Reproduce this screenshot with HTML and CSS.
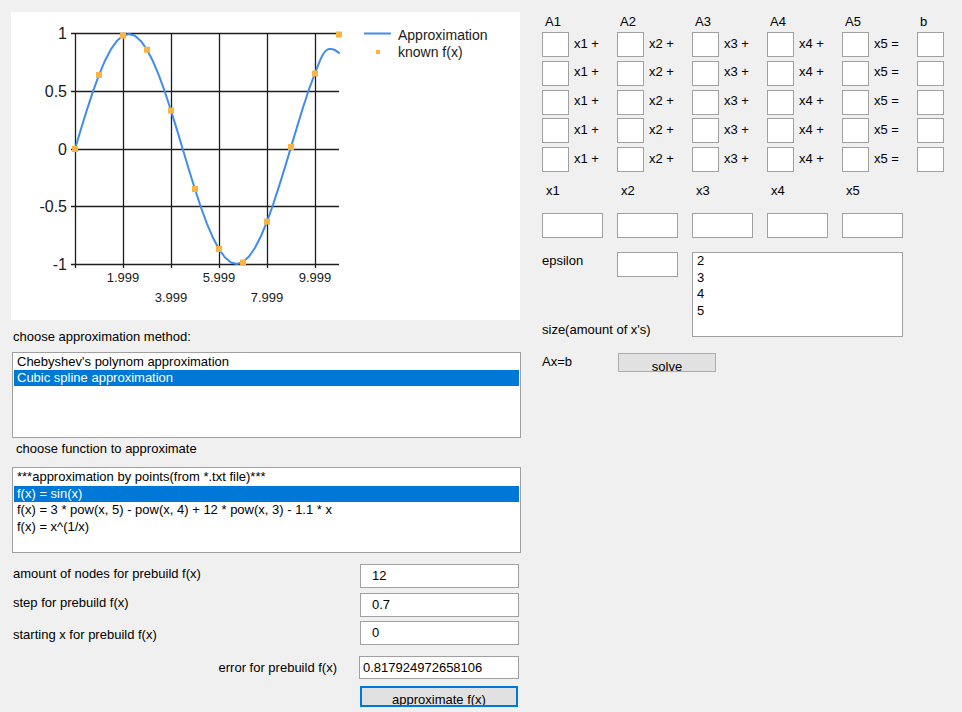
FILE: index.html
```html
<!DOCTYPE html>
<html>
<head>
<meta charset="utf-8">
<link rel="stylesheet" href="styles.css">
</head>
<body>
<div class="app">
  <div class="left">
    <div class="chart">
      <svg width="509" height="308" viewBox="11 12 509 308">
        <g class="grid">
          <path d="M71,33.5H339M71,91.5H339M71,149.5H339M71,206.5H339M71,264.5H339"/>
          <path d="M75.5,33V268M123.5,33V268M171.5,33V268M219.5,33V268M267.5,33V268M315.5,33V268"/>
        </g>
        <path class="curve" d="M75,149 L81,129 L87,109.6 L93,91.4 L99,74.9 L105,60.7 L111,49.2 L117,40.8 L123,35.7 L129,34 L135,35.8 L141,41.2 L147,49.7 L153,61.3 L159,75.7 L165,92.2 L171,110.5 L177,129.9 L183,150 L189,170 L195,189.3 L201,207.5 L207,223.8 L213,237.8 L219,249.2 L225,257.5 L231,262.5 L237,264 L243,262 L249,256.6 L255,247.8 L261,236 L267,221.6 L273,204.9 L279,186.4 L285,167.1 L291,147.1 L297,127.1 L303,107.5 L309,89.2 L315,73.4 C319,63 323,50 329,49 C333,48.5 336,50 339,53"/>
        <g class="pts">
          <rect x="72" y="146" width="6" height="6"/>
          <rect x="96" y="72" width="6" height="6"/>
          <rect x="120" y="32.7" width="6" height="6"/>
          <rect x="144" y="46.7" width="6" height="6"/>
          <rect x="168" y="107.5" width="6" height="6"/>
          <rect x="192" y="186" width="6" height="6"/>
          <rect x="216" y="246" width="6" height="6"/>
          <rect x="240" y="259.5" width="6" height="6"/>
          <rect x="264" y="218.6" width="6" height="6"/>
          <rect x="288" y="144" width="6" height="6"/>
          <rect x="312" y="70.5" width="6" height="6"/>
          <rect x="336" y="31.5" width="6" height="6"/>
        </g>
        <g class="ylab">
          <text x="67" y="38.5">1</text>
          <text x="67" y="96.5">0.5</text>
          <text x="67" y="154.5">0</text>
          <text x="67" y="212">-0.5</text>
          <text x="67" y="269.5">-1</text>
        </g>
        <g class="xlab">
          <text x="123" y="281.5">1.999</text>
          <text x="219" y="281.5">5.999</text>
          <text x="315" y="281.5">9.999</text>
          <text x="171" y="301.5">3.999</text>
          <text x="267" y="301.5">7.999</text>
        </g>
        <path class="legline" d="M364,33.5H391"/>
        <rect class="legpt" x="376" y="50" width="4" height="4"/>
        <text class="legtext" x="398" y="40">Approximation</text>
        <text class="legtext" x="398" y="57">known f(x)</text>
      </svg>
    </div>
    <div class="caption cap-method">choose approximation method:</div>
    <div class="listbox lb-method">
      <div class="item">Chebyshev's polynom approximation</div>
      <div class="item selected">Cubic spline approximation</div>
    </div>
    <div class="caption cap-func">choose function to approximate</div>
    <div class="listbox lb-func">
      <div class="item">***approximation by points(from *.txt file)***</div>
      <div class="item selected">f(x) = sin(x)</div>
      <div class="item">f(x) = 3 * pow(x, 5) - pow(x, 4) + 12 * pow(x, 3) - 1.1 * x</div>
      <div class="item">f(x) = x^(1/x)</div>
    </div>
    <div class="params">
      <div class="param p1"><span class="plabel">amount of nodes for prebuild f(x)</span><div class="tb">12</div></div>
      <div class="param p2"><span class="plabel">step for prebuild f(x)</span><div class="tb">0.7</div></div>
      <div class="param p3"><span class="plabel">starting x for prebuild f(x)</span><div class="tb">0</div></div>
      <div class="param p4"><span class="plabel">error for prebuild f(x)</span><div class="tb">0.817924972658106</div></div>
      <div class="param pbtn"><div class="btn btn-approx">approximate f(x)</div></div>
    </div>
  </div>

  <div class="right">
    <div class="mhead"><span>A1</span><span>A2</span><span>A3</span><span>A4</span><span>A5</span><span>b</span></div>
    <div class="matrix">
      <div class="mrow">
        <div class="cell"><div class="tb"></div><span>x1 +</span></div>
        <div class="cell"><div class="tb"></div><span>x2 +</span></div>
        <div class="cell"><div class="tb"></div><span>x3 +</span></div>
        <div class="cell"><div class="tb"></div><span>x4 +</span></div>
        <div class="cell"><div class="tb"></div><span>x5 =</span></div>
        <div class="cell"><div class="tb"></div></div>
      </div>
      <div class="mrow">
        <div class="cell"><div class="tb"></div><span>x1 +</span></div>
        <div class="cell"><div class="tb"></div><span>x2 +</span></div>
        <div class="cell"><div class="tb"></div><span>x3 +</span></div>
        <div class="cell"><div class="tb"></div><span>x4 +</span></div>
        <div class="cell"><div class="tb"></div><span>x5 =</span></div>
        <div class="cell"><div class="tb"></div></div>
      </div>
      <div class="mrow">
        <div class="cell"><div class="tb"></div><span>x1 +</span></div>
        <div class="cell"><div class="tb"></div><span>x2 +</span></div>
        <div class="cell"><div class="tb"></div><span>x3 +</span></div>
        <div class="cell"><div class="tb"></div><span>x4 +</span></div>
        <div class="cell"><div class="tb"></div><span>x5 =</span></div>
        <div class="cell"><div class="tb"></div></div>
      </div>
      <div class="mrow">
        <div class="cell"><div class="tb"></div><span>x1 +</span></div>
        <div class="cell"><div class="tb"></div><span>x2 +</span></div>
        <div class="cell"><div class="tb"></div><span>x3 +</span></div>
        <div class="cell"><div class="tb"></div><span>x4 +</span></div>
        <div class="cell"><div class="tb"></div><span>x5 =</span></div>
        <div class="cell"><div class="tb"></div></div>
      </div>
      <div class="mrow">
        <div class="cell"><div class="tb"></div><span>x1 +</span></div>
        <div class="cell"><div class="tb"></div><span>x2 +</span></div>
        <div class="cell"><div class="tb"></div><span>x3 +</span></div>
        <div class="cell"><div class="tb"></div><span>x4 +</span></div>
        <div class="cell"><div class="tb"></div><span>x5 =</span></div>
        <div class="cell"><div class="tb"></div></div>
      </div>
    </div>
    <div class="xlabels"><span>x1</span><span>x2</span><span>x3</span><span>x4</span><span>x5</span></div>
    <div class="xboxes"><div class="tb"></div><div class="tb"></div><div class="tb"></div><div class="tb"></div><div class="tb"></div></div>
    <div class="lower">
      <div class="lcol"><span class="eps">epsilon</span><span class="size">size(amount of x's)</span></div>
      <div class="ecol"><div class="tb"></div></div>
      <div class="listbox sizes">
        <div class="item">2</div>
        <div class="item">3</div>
        <div class="item">4</div>
        <div class="item">5</div>
      </div>
    </div>
    <div class="axb"><span class="axlabel">Ax=b</span><div class="btn btn-solve">solve</div></div>
  </div>
</div>
</body>
</html>
```

FILE: styles.css
```css
* { box-sizing: border-box; }
html, body { margin: 0; padding: 0; }
body {
  width: 962px;
  height: 712px;
  background: #f0f0f0;
  font-family: "Liberation Sans", Arial, sans-serif;
  font-size: 13px;
  line-height: 15px;
  color: #000;
  overflow: hidden;
}
.app { display: flex; align-items: flex-start; }

/* left column */
.left { flex: none; width: 521px; padding: 12px 0 0 11px; }
.chart { width: 509px; height: 308px; background: #fff; }
.chart svg { display: block; }
.grid path { stroke: #1e1e1e; stroke-width: 1.3; fill: none; }
.curve { fill: none; stroke: #418cf0; stroke-width: 2; stroke-linejoin: round; stroke-linecap: round; }
.pts rect { fill: #fcb441; }
.ylab text { font-family: "Liberation Sans", Arial, sans-serif; font-size: 16px; fill: #1a1a1a; text-anchor: end; }
.xlab text { font-family: "Liberation Sans", Arial, sans-serif; font-size: 13px; fill: #1a1a1a; text-anchor: middle; }
.legline { stroke: #418cf0; stroke-width: 2; fill: none; }
.legpt { fill: #fcb441; }
.legtext { font-family: "Liberation Sans", Arial, sans-serif; font-size: 14px; fill: #1a1a1a; }

.caption { white-space: nowrap; }
.cap-method { margin-top: 9px; padding-left: 2px; }
.cap-func { margin-top: 3px; padding-left: 5px; }

.listbox { background: #fff; border: 1px solid #a0a0a0; padding: 1px 1px 0; overflow: hidden; }
.lb-method, .lb-func { margin-left: 1px; width: 509px; height: 86px; }
.lb-method { margin-top: 8px; }
.lb-func { margin-top: 11px; }
.item { height: 16px; line-height: 16px; padding-left: 3px; white-space: nowrap; }
.lb-func .item { height: 16.5px; line-height: 16.5px; }
.item.selected { background: #0078d7; color: #fff; }

.tb { background: #fff; border: 1px solid #a0a0a0; height: 24px; line-height: 22px; white-space: nowrap; }

.params { margin-top: 11px; display: flex; flex-direction: column; }
.param { display: grid; grid-template-columns: 349px 159px; }
.plabel { padding-left: 2px; white-space: nowrap; }
.param .tb { padding-left: 11px; }
.p1 .plabel, .p2 .plabel { padding-top: 2px; }
.p2 { margin-top: 5px; }
.p3 { margin-top: 4px; }
.p3 .plabel { padding-top: 6px; }
.p4 { margin-top: 11px; }
.p4 .plabel { padding-top: 4px; padding-right: 23px; text-align: right; }
.p4 .tb { margin-left: -1px; height: 23px; line-height: 21px; padding-left: 3px; }
.pbtn { margin-top: 7px; }

.btn {
  background: #e1e1e1;
  border: 1px solid #adadad;
  text-align: center;
  overflow: hidden;
  white-space: nowrap;
  line-height: 15px;
}
.btn-approx { grid-column: 2; width: 158px; height: 21px; border: 2px solid #0078d7; padding-top: 4px; }
.btn-solve { width: 98px; height: 19px; padding-top: 5px; }

/* right column */
.right { flex: none; margin-left: 21px; padding-top: 14px; }
.mhead, .mrow { display: grid; grid-template-columns: repeat(6, 75px); }
.mhead { height: 18px; }
.mhead span { padding-left: 3px; }
.matrix { display: flex; flex-direction: column; gap: 3.75px; }
.cell { display: flex; align-items: center; }
.cell .tb { width: 27px; height: 25px; flex: none; }
.cell span { margin-left: 5px; margin-top: -3px; white-space: nowrap; }

.xlabels { margin-top: 11px; display: grid; grid-template-columns: repeat(5, 75px); }
.xlabels span { padding-left: 4px; }
.xboxes { margin-top: 15px; display: grid; grid-template-columns: repeat(5, 75px); }
.xboxes .tb { width: 61px; height: 25px; }

.lower { margin-top: 14px; display: flex; height: 85px; }
.lcol { width: 75px; flex: none; display: flex; flex-direction: column; justify-content: space-between; }
.eps { padding-top: 1px; }
.size { white-space: nowrap; }
.ecol { width: 75px; flex: none; }
.ecol .tb { width: 61px; height: 25px; }
.sizes { width: 211px; height: 85px; padding: 0 0 0 1px; }
.sizes .item { height: 16.7px; line-height: 16.7px; }

.axb { margin-top: 16px; display: flex; }
.axlabel { width: 76px; padding-top: 1px; }
```
